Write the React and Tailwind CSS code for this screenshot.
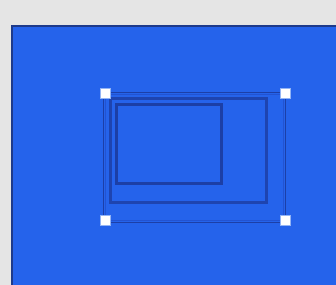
export default function App() {
  return (
    <div className="w-[336px] h-[285px] bg-[#e5e5e5] overflow-hidden pl-[11px] pt-[25px]">
      <div className="relative w-[330px] h-[270px] bg-[#2563eb] border-2 border-[#1e3a8a]">
        <div className="absolute left-[90px] top-[65px] w-[183px] h-[131px] border border-[#1c3fa8]" />
        <div className="absolute left-[92px] top-[67px] w-[179px] h-[127px] border border-[#2253d2]" />
        <div className="absolute left-[96px] top-[70px] w-[159px] h-[107px] border-[3px] border-[#1e44b0]" />
        <div className="absolute left-[102px] top-[76px] w-[108px] h-[82px] border-[3px] border-[#1c3fa6]" />
        {[
          "left-[87px] top-[61px]",
          "left-[267px] top-[61px]",
          "left-[87px] top-[188px]",
          "left-[267px] top-[188px]",
        ].map((c, i) => (
          <div key={i} className={`absolute ${c} w-[11px] h-[11px] bg-white border border-[#93b4f5]`} />
        ))}
      </div>
    </div>
  );
}
